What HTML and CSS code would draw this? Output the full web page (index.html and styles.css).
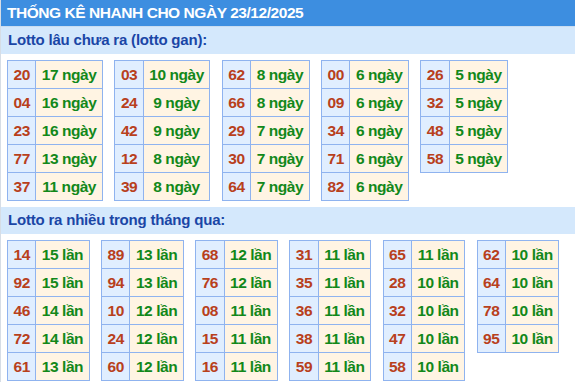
FILE: index.html
```html
<!DOCTYPE html>
<html lang="vi">
<head>
<meta charset="utf-8">
<link rel="stylesheet" href="styles.css">
</head>
<body>
<div class="box">
  <div class="title">THỐNG KÊ NHANH CHO NGÀY 23/12/2025</div>
  <div class="sub">Lotto lâu chưa ra (lotto gan):</div>
  <div class="tables">
    <table class="t"><tr><td class="n">20</td><td class="v">17 ngày</td></tr><tr><td class="n">04</td><td class="v">16 ngày</td></tr><tr><td class="n">23</td><td class="v">16 ngày</td></tr><tr><td class="n">77</td><td class="v">13 ngày</td></tr><tr><td class="n">37</td><td class="v">11 ngày</td></tr></table>
    <table class="t"><tr><td class="n">03</td><td class="v">10 ngày</td></tr><tr><td class="n">24</td><td class="v">9 ngày</td></tr><tr><td class="n">42</td><td class="v">9 ngày</td></tr><tr><td class="n">12</td><td class="v">8 ngày</td></tr><tr><td class="n">39</td><td class="v">8 ngày</td></tr></table>
    <table class="t"><tr><td class="n">62</td><td class="v">8 ngày</td></tr><tr><td class="n">66</td><td class="v">8 ngày</td></tr><tr><td class="n">29</td><td class="v">7 ngày</td></tr><tr><td class="n">30</td><td class="v">7 ngày</td></tr><tr><td class="n">64</td><td class="v">7 ngày</td></tr></table>
    <table class="t"><tr><td class="n">00</td><td class="v">6 ngày</td></tr><tr><td class="n">09</td><td class="v">6 ngày</td></tr><tr><td class="n">34</td><td class="v">6 ngày</td></tr><tr><td class="n">71</td><td class="v">6 ngày</td></tr><tr><td class="n">82</td><td class="v">6 ngày</td></tr></table>
    <table class="t"><tr><td class="n">26</td><td class="v">5 ngày</td></tr><tr><td class="n">32</td><td class="v">5 ngày</td></tr><tr><td class="n">48</td><td class="v">5 ngày</td></tr><tr><td class="n">58</td><td class="v">5 ngày</td></tr></table>
  </div>
  <div class="sub">Lotto ra nhiều trong tháng qua:</div>
  <div class="tables">
    <table class="t"><tr><td class="n">14</td><td class="v">15 lần</td></tr><tr><td class="n">92</td><td class="v">15 lần</td></tr><tr><td class="n">46</td><td class="v">14 lần</td></tr><tr><td class="n">72</td><td class="v">14 lần</td></tr><tr><td class="n">61</td><td class="v">13 lần</td></tr></table>
    <table class="t"><tr><td class="n">89</td><td class="v">13 lần</td></tr><tr><td class="n">94</td><td class="v">13 lần</td></tr><tr><td class="n">10</td><td class="v">12 lần</td></tr><tr><td class="n">24</td><td class="v">12 lần</td></tr><tr><td class="n">60</td><td class="v">12 lần</td></tr></table>
    <table class="t"><tr><td class="n">68</td><td class="v">12 lần</td></tr><tr><td class="n">76</td><td class="v">12 lần</td></tr><tr><td class="n">08</td><td class="v">11 lần</td></tr><tr><td class="n">15</td><td class="v">11 lần</td></tr><tr><td class="n">16</td><td class="v">11 lần</td></tr></table>
    <table class="t"><tr><td class="n">31</td><td class="v">11 lần</td></tr><tr><td class="n">35</td><td class="v">11 lần</td></tr><tr><td class="n">36</td><td class="v">11 lần</td></tr><tr><td class="n">38</td><td class="v">11 lần</td></tr><tr><td class="n">59</td><td class="v">11 lần</td></tr></table>
    <table class="t"><tr><td class="n">65</td><td class="v">11 lần</td></tr><tr><td class="n">28</td><td class="v">10 lần</td></tr><tr><td class="n">32</td><td class="v">10 lần</td></tr><tr><td class="n">47</td><td class="v">10 lần</td></tr><tr><td class="n">58</td><td class="v">10 lần</td></tr></table>
    <table class="t"><tr><td class="n">62</td><td class="v">10 lần</td></tr><tr><td class="n">64</td><td class="v">10 lần</td></tr><tr><td class="n">78</td><td class="v">10 lần</td></tr><tr><td class="n">95</td><td class="v">10 lần</td></tr></table>
  </div>
</div>
</body>
</html>
```
FILE: styles.css
```css
html, body {
  margin: 0;
  padding: 0;
  background: #ffffff;
}
body {
  font-family: "Liberation Sans", Arial, sans-serif;
}
.box {
  width: 600px;
  border-left: 1px solid #d6dde6;
}
.title {
  height: 26px;
  line-height: 26px;
  background: #3d8ee0;
  color: #ffffff;
  font-weight: bold;
  font-size: 15.5px;
  padding-left: 6px;
  border-bottom: 1px solid #c9dcf0;
  letter-spacing: -0.45px;
}
.sub {
  height: 27px;
  line-height: 26px;
  background: #d4e8fc;
  color: #1a46a6;
  font-weight: bold;
  font-size: 15px;
  letter-spacing: -0.2px;
  padding-left: 7px;
}
.tables {
  display: flex;
  align-items: flex-start;
  gap: 11.5px;
  padding: 6px 6px 6px 6px;
}
.t {
  border-collapse: collapse;
  font-size: 15.5px;
  font-weight: bold;
  letter-spacing: -0.45px;
}
.t td {
  border: 1px solid #8fb3ef;
  height: 27px;
  padding: 0 5.5px;
  text-align: center;
  white-space: nowrap;
}
.t .n {
  background: #e0eeff;
  color: #b8401c;
}
.t .v {
  background: #fff4e3;
  color: #12881a;
}
```
